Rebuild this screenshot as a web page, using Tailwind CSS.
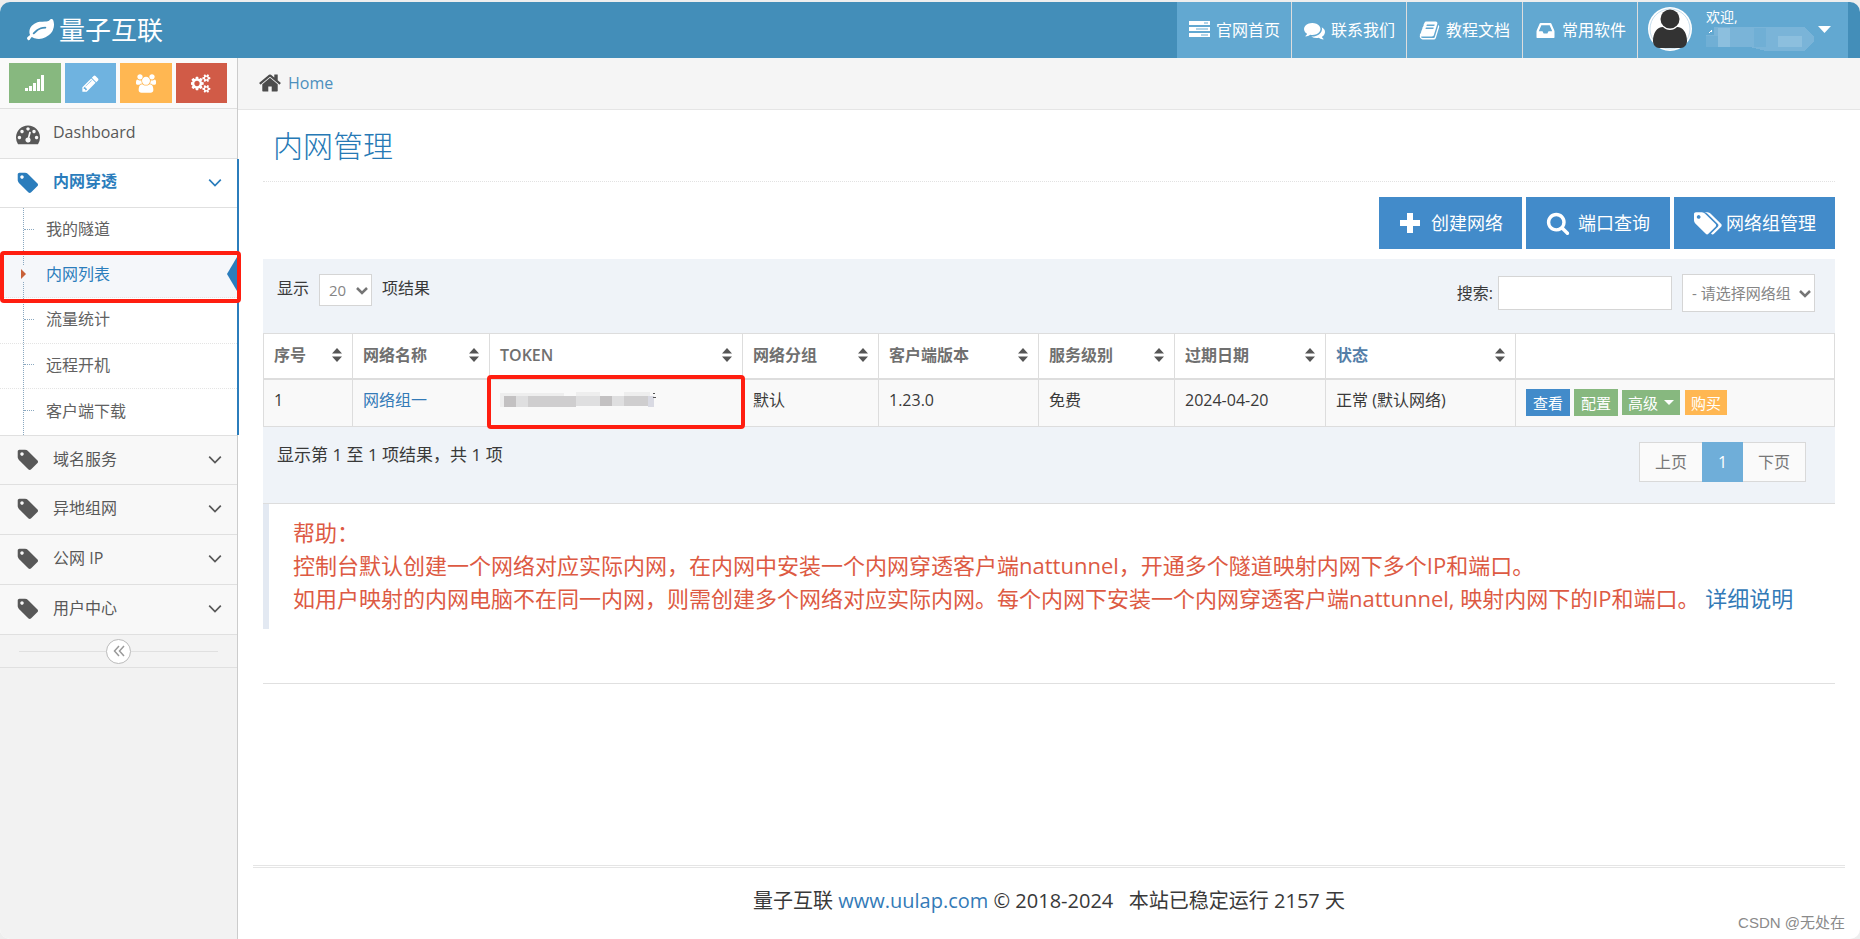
<!DOCTYPE html>
<html lang="zh-CN">
<head>
<meta charset="utf-8">
<meta name="viewport" content="width=device-width, initial-scale=1">
<title>内网管理</title>
<script src="https://cdn.jsdelivr.net/npm/@tailwindcss/browser@4"></script>
</head>
<body class="bg-[#eeeeee] font-['Open_Sans','Noto_Sans_CJK_SC',sans-serif] text-base leading-6 text-[#393939]">
<!-- shared icon shapes -->
<svg class="hidden" aria-hidden="true">
  <symbol id="tag" viewBox="0 0 1792 1792"><path d="M576 448q0-53-37.500-90.500t-90.500-37.500-90.500 37.500-37.500 90.500 37.500 90.500 90.500 37.500 90.500-37.500 37.500-90.500zm1067 576q0 53-37 90l-491 492q-39 37-91 37-53 0-90-37l-715-716q-38-37-64.500-101t-26.500-117v-416q0-52 38-90t90-38h416q53 0 117 26.500t102 64.500l715 714q37 39 37 91z"/></symbol>
  <symbol id="down" viewBox="0 0 14 10"><path d="M1.200 1.700 7 7.500l5.800-5.800" fill="none" stroke="currentColor" stroke-width="1.700"/></symbol>
  <symbol id="sort" viewBox="0 0 10 14"><path d="M5 0 10 5.500H0zM0 8.500h10L5 14z"/></symbol>
</svg>
<div class="flex min-h-screen flex-col pt-[2px]">
<div class="relative flex grow flex-col overflow-hidden rounded-[10px] bg-white">

<header class="flex h-14 shrink-0 items-stretch justify-between bg-[#438eb9] pr-3 text-white">
  <a href="#" class="flex items-center gap-[5px] pl-[27px] text-[26px] leading-8">
    <svg class="size-[27px]" fill="currentColor" viewBox="0 0 1792 1792"><path d="M1280 704q0-26-19-45t-45-19q-172 0-318 49.500t-259.500 134-235.500 219.500q-19 21-19 45 0 26 19 45t45 19q24 0 45-19 27-24 74-71t67-66q137-124 268.500-176t313.500-52q26 0 45-19t19-45zm512-198q0 95-20 193-46 224-184.500 383t-357.500 268q-214 108-438 108-148 0-286-47-15-5-88-42t-96-37q-16 0-39.500 32t-45 70-52.500 70-60 32q-43 0-63.500-17.500t-45.500-59.500q-2-4-6-11t-5.500-10-3-9.500-1.500-13.500q0-35 31-73.500t68-65.500 68-56 31-48q0-4-14-38t-16-44q-9-51-9-104 0-115 43.500-220t119-184.500 170.500-139 204-95.500q55-18 145-25.500t179.500-9 178.500-6 163.500-24 113.500-56.500l29.500-29.500 29.500-28 27-20 36.500-16 43.500-4.500q39 0 70.500 46t47.500 112 24 124 8 96z"/></svg>
    量子互联
  </a>
  <nav class="flex bg-[#62a8d1]">
    <a href="#" class="flex w-[115px] items-center gap-1.5 border-r border-[#dddddd] pl-3">
      <svg class="size-[21px]" fill="currentColor" viewBox="0 0 21 21"><path fill-rule="evenodd" d="M0 1h21v4H0zM15 2.500h4v1h-4zM0 7h21v4H0zM7 8.500h12v1H7zM0 13h21v4H0zM12 14.500h7v1h-7z"/></svg>
      官网首页</a>
    <a href="#" class="flex w-[115px] items-center gap-1.5 border-r border-[#dddddd] pl-3">
      <svg class="size-[21px]" fill="currentColor" viewBox="0 0 1792 1792"><path d="M1408 768q0 139-94 257t-256.500 186.500-353.500 68.500q-86 0-176-16-124 88-278 128-36 9-86 16h-3q-11 0-20.500-8t-11.500-21q-1-3-1-6.500t.5-6.500 2-6l2.500-5 3.500-5.500 4-5 4.500-5 4-4.500q5-6 23-25t26-29.500 22.500-29 25-38.500 20.500-44q-124-72-195-177t-71-224q0-139 94-257t256.500-186.500 353.500-68.500 353.500 68.500 256.500 186.500 94 257zm384 256q0 120-71 224.500t-195 176.500q10 24 20.500 44t25 38.500 22.500 29 26 29.500 23 25q1 1 4 4.500t4.500 5 4 5 3.500 5.500l2.500 5 2 6 .5 6.500-1 6.500q-3 14-13 22t-22 7q-50-7-86-16-154-40-278-128-90 16-176 16-271 0-472-132 58 4 88 4 161 0 309-45t264-129q125-92 192-212t67-254q0-77-23-152 129 71 204 178t75 230z"/></svg>
      联系我们</a>
    <a href="#" class="flex w-[116px] items-center gap-1.5 border-r border-[#dddddd] pl-3">
      <svg class="size-[21px]" fill="currentColor" viewBox="0 0 1792 1792"><path d="M1703 478q40 57 18 129l-275 906q-19 64-76.500 107.500t-122.500 43.500h-923q-77 0-148.500-53.500t-99.500-131.500q-24-67-2-127 0-4 3-27t4-37q1-8-3-21.500t-3-19.500q2-11 8-21t16.500-23.500 16.500-23.500q23-38 45-91.500t30-91.500q3-10 .5-30t-.5-28q3-11 17-28t17-23q21-36 42-92t25-90q1-9-2.500-32t.5-28q4-13 22-30.500t22-22.500q19-26 42.500-84.500t27.500-96.500q1-8-3-25.500t-2-26.500q2-8 9-18t18-23 17-21q8-12 16.500-30.500t15-35 16-36 19.500-32 26.500-23.500 36-11.500 47.500 5.500l-1 3q38-9 51-9h761q74 0 114 56t18 130l-274 906q-36 119-71.500 153.500t-128.500 34.500h-869q-27 0-38 15-11 16-1 43 24 70 144 70h923q29 0 56-15.500t35-41.500l300-987q7-22 5-57 38 15 59 43zm-1064 2q-4 13 2 22.500t20 9.500h608q13 0 25.500-9.500t16.500-22.500l21-64q4-13-2-22.500t-20-9.500h-608q-13 0-25.500 9.500t-16.500 22.500zm-83 256q-4 13 2 22.500t20 9.500h608q13 0 25.500-9.500t16.500-22.500l21-64q4-13-2-22.500t-20-9.500h-608q-13 0-25.500 9.500t-16.500 22.500z"/></svg>
      教程文档</a>
    <a href="#" class="flex w-[115px] items-center gap-1.5 border-r border-[#dddddd] pl-3">
      <svg class="size-[21px]" fill="currentColor" viewBox="0 0 1792 1792"><path d="M1151 960h316q-1-3-2.500-8.500t-2.500-7.500l-212-496h-708l-212 496q-1 3-2.500 8.500t-2.500 7.500h316l95 192h320zm513 30v482q0 26-19 45t-45 19h-1408q-26 0-45-19t-19-45v-482q0-62 25-123l238-552q10-25 36.500-42t52.500-17h832q26 0 52.500 17t36.500 42l238 552q25 61 25 123z"/></svg>
      常用软件</a>
    <button type="button" class="flex w-[210px] items-center pb-0.5 pl-2.5 text-left" aria-label="用户菜单">
      <svg class="size-11 shrink-0" viewBox="0 0 44 44"><circle cx="22" cy="22" r="22" fill="#fff"/><circle cx="22" cy="22" r="20" fill="none" stroke="#c8dfee" stroke-width="1"/><circle cx="22" cy="12" r="9.500" fill="#333"/><path d="M5 34c0-8 4-14 10-14 2 2 4 3 7 3s5-1 7-3c6 0 10 6 10 14 0 4-3 7-6 7H11c-3 0-6-3-6-7z" fill="#333"/></svg>
      <span class="ml-3.5 flex grow flex-col">
        <span class="text-sm leading-5">欢迎,</span>
        <svg class="h-6 w-[110px]" viewBox="0 0 110 24" shape-rendering="crispEdges"><path d="M8 0h90l10 10v5L98 24H60L44 20H0V8h8z" fill="#7ab4d8"/><path d="M12 1h12v19H12zM72 9h24v11H72z" fill="#8cbfde"/><path d="M48 1h12v19H48zM0 9h12v11H0z" fill="#70afd5"/><path d="M2 6l4-3v2z" fill="#fff"/></svg>
      </span>
      <svg class="mr-[17px] h-[7px] w-[13px]" fill="currentColor" viewBox="0 0 13 7"><path d="M0 0h13L6.500 7z"/></svg>
    </button>
  </nav>
</header>

<div class="flex grow">
<aside class="flex w-[238px] shrink-0 flex-col border-r border-[#cccccc] bg-[#f2f2f2] text-[#585858]">
  <div class="grid h-[51px] grid-cols-4 gap-1 border-b border-[#e0e0e0] bg-[#fafafa] pt-[5px] pr-2.5 pb-[5px] pl-[9px] text-white">
    <button type="button" aria-label="统计" class="flex items-center justify-center bg-[#87b87f]"><svg class="h-4 w-5" fill="currentColor" viewBox="0 0 20 16"><path d="M0 13h3v3H0zM4 11h3v5H4zM8 8h3v8H8zM12 4h3v12h-3zM16 0h3v16h-3z"/></svg></button>
    <button type="button" aria-label="编辑" class="flex items-center justify-center bg-[#6fb3e0]"><svg class="size-[19px]" fill="currentColor" viewBox="0 0 1792 1792"><path d="M491 1536l91-91-235-235-91 91v107h128v128h107zm523-928q0-22-22-22-10 0-17 7l-542 542q-7 7-7 17 0 22 22 22 10 0 17-7l542-542q7-7 7-17zm-54-192l416 416-832 832h-416v-416zm683 96q0 53-37 90l-166 166-416-416 166-165q36-38 90-38 53 0 91 38l235 234q37 39 37 91z"/></svg></button>
    <button type="button" aria-label="用户" class="flex items-center justify-center bg-[#ffb752]"><svg class="h-[19px] w-5" fill="currentColor" viewBox="0 0 1920 1792"><path d="M593 896q-162 5-265 128h-134q-82 0-138-40.500t-56-118.500q0-353 124-353 6 0 43.500 21t97.500 42.500 119 21.500q67 0 133-23-5 37-5 66 0 159 93 256zm1071 637q0 120-73 189.500t-194 69.500h-874q-121 0-194-69.500t-73-189.500q0-53 3.500-103.500t14-109 26.500-108.500 43-97.500 62-81 85.500-53.500 111.500-20q10 0 43 21.500t73 48 107 48 135 21.500 135-21.500 107-48 73-48 43-21.500q61 0 111.500 20t85.500 53.500 62 81 43 97.500 26.500 108.500 14 109 3.500 103.500zm-1024-1277q0 106-75 181t-181 75-181-75-75-181 75-181 181-75 181 75 75 181zm704 384q0 159-112.500 271.500t-271.500 112.500-271.500-112.500-112.500-271.500 112.500-271.500 271.500-112.500 271.500 112.500 112.500 271.500zm576 225q0 78-56 118.500t-138 40.500h-134q-103-123-265-128 93-97 93-256 0-29-5-66 66 23 133 23 59 0 119-21.500t97.500-42.500 43.500-21q124 0 124 353zm-128-609q0 106-75 181t-181 75-181-75-75-181 75-181 181-75 181 75 75 181z"/></svg></button>
    <button type="button" aria-label="设置" class="flex items-center justify-center bg-[#d15b47]"><svg class="h-[19px] w-5" fill="currentColor" viewBox="0 0 1920 1792"><path d="M832 896q0-106-75-181t-181-75-181 75-75 181 75 181 181 75 181-75 75-181zm768 512q0-52-38-90t-90-38-90 38-38 90q0 53 37.500 90.500t90.500 37.500 90.500-37.500 37.500-90.500zm0-1024q0-52-38-90t-90-38-90 38-38 90q0 53 37.500 90.500t90.500 37.500 90.500-37.500 37.500-90.500zm-384 421v185q0 10-7 19.500t-16 10.500l-155 24q-11 35-32 76 34 48 90 115 7 11 7 20 0 12-7 19-23 30-82.500 89.500t-78.500 59.500q-11 0-21-7l-115-90q-37 19-77 31-11 108-23 155-7 24-30 24h-186q-11 0-20-7.500t-10-17.500l-23-153q-34-10-75-31l-118 89q-7 7-20 7-11 0-21-8-144-133-144-160 0-9 7-19 10-14 41-53t47-61q-23-44-35-82l-152-24q-10-1-17-9.500t-7-19.500v-185q0-10 7-19.500t16-10.500l155-24q11-35 32-76-34-48-90-115-7-11-7-20 0-12 7-20 22-30 82-89t79-59q11 0 21 7l115 90q34-18 77-32 11-108 23-154 7-24 30-24h186q11 0 20 7.500t10 17.500l23 153q34 10 75 31l118-89q8-7 20-7 11 0 21 8 144 133 144 160 0 8-7 19-12 16-42 54t-45 60q23 48 34 82l152 23q10 2 17 10.500t7 19.500zm640 533v140q0 16-149 31-12 27-30 52 51 113 51 138 0 4-4 7-122 71-124 71-8 0-46-47t-52-68q-20 2-30 2t-30-2q-14 21-52 68t-46 47q-2 0-124-71-4-3-4-7 0-25 51-138-18-25-30-52-149-15-149-31v-140q0-16 149-31 13-29 30-52-51-113-51-138 0-4 4-7 4-2 35-20t59-34 30-16q8 0 46 46.500t52 67.500q20-2 30-2t30 2q51-71 92-112l6-2q4 0 124 70 4 3 4 7 0 25-51 138 17 23 30 52 149 15 149 31zm0-1024v140q0 16-149 31-12 27-30 52 51 113 51 138 0 4-4 7-122 71-124 71-8 0-46-47t-52-68q-20 2-30 2t-30-2q-14 21-52 68t-46 47q-2 0-124-71-4-3-4-7 0-25 51-138-18-25-30-52-149-15-149-31v-140q0-16 149-31 13-29 30-52-51-113-51-138 0-4 4-7 4-2 35-20t59-34 30-16q8 0 46 46.500t52 67.500q20-2 30-2t30 2q51-71 92-112l6-2q4 0 124 70 4 3 4 7 0 25-51 138 17 23 30 52 149 15 149 31z"/></svg></button>
  </div>

  <nav>
    <a href="#" class="flex h-[50px] items-center border-b border-[#e0e0e0] bg-[#f8f8f8] pb-1 pl-4">
      <svg class="mt-1 mr-[13px] size-6" fill="currentColor" viewBox="0 0 1792 1792"><path d="M384 1152q0-53-37.500-90.500t-90.500-37.500-90.500 37.500-37.500 90.500 37.500 90.500 90.500 37.500 90.500-37.500 37.500-90.500zm192-448q0-53-37.500-90.500t-90.500-37.500-90.500 37.500-37.500 90.500 37.500 90.500 90.500 37.500 90.500-37.500 37.500-90.500zm428 481l101-382q6-26-7.500-48.500t-38.500-29.500-48 6.500-30 39.500l-101 382q-60 5-107 43.500t-63 98.500q-20 77 20 146t117 89 146-20 89-117q16-60-6-117t-72-91zm660-33q0-53-37.500-90.500t-90.500-37.500-90.500 37.500-37.500 90.500 37.500 90.500 90.500 37.500 90.500-37.500 37.500-90.500zm-640-640q0-53-37.500-90.500t-90.500-37.500-90.500 37.500-37.500 90.500 37.500 90.500 90.500 37.500 90.500-37.500 37.500-90.500zm448 192q0-53-37.500-90.500t-90.500-37.500-90.500 37.500-37.500 90.500 37.500 90.500 90.500 37.500 90.500-37.500 37.500-90.500zm320 448q0 261-141 483-19 29-54 29h-1402q-35 0-54-29-141-221-141-483 0-182 71-348t191-286 286-191 348-71 348 71 286 191 191 286 71 348z"/></svg>
      Dashboard</a>

    <div class="relative -mr-[2px] border-r-2 border-[#2b7dbc] bg-white">
      <a href="#" class="flex h-[49px] items-center border-b border-[#e0e0e0] pb-1 pl-4 font-bold text-[#2b7dbc]">
        <svg class="mt-1 mr-[13px] size-6" fill="currentColor"><use href="#tag"/></svg>内网穿透
        <svg class="mt-1 mr-[15px] ml-auto h-2.5 w-3.5"><use href="#down"/></svg></a>
      <ul class="relative text-[#616161] before:absolute before:top-0 before:bottom-0 before:left-[23px] before:z-10 before:border-l before:border-dotted before:border-[#8aa8c0]">
        <li class="flex h-[45px] items-center pb-[3px]"><span class="ml-6 w-2.5 border-t border-dotted border-[#8aa8c0]"></span><a href="#" class="ml-3">我的隧道</a></li>
        <li class="relative flex h-[45px] items-center border-y border-dotted border-[#e4e4e4] bg-[#f5f7fa] pb-[3px] text-[#2b7dbc]">
          <svg class="z-20 ml-[19px] h-4 w-[9px]" viewBox="0 0 9 16"><path fill="#f5f7fa" d="M0 0h9v16H0z"/><path fill="#c86139" d="M2 3l5 5-5 5z"/></svg>
          <a href="#" class="ml-[18px]">内网列表</a>
          <svg class="absolute right-0 h-[34px] w-2.5" fill="#2b7dbc" viewBox="0 0 10 34"><path d="M10 0v34L0 17z"/></svg>
          <span class="pointer-events-none absolute -top-[3px] -right-1 left-0 z-30 h-[52px] rounded-[4px] border-4 border-[#ff1e10]"></span>
        </li>
        <li class="flex h-[46px] items-center border-b border-dotted border-[#e4e4e4] pb-[3px]"><span class="ml-6 w-2.5 border-t border-dotted border-[#8aa8c0]"></span><a href="#" class="ml-3">流量统计</a></li>
        <li class="flex h-[45px] items-center border-b border-dotted border-[#e4e4e4] pb-[3px]"><span class="ml-6 w-2.5 border-t border-dotted border-[#8aa8c0]"></span><a href="#" class="ml-3">远程开机</a></li>
        <li class="flex h-[46px] items-center pb-[3px]"><span class="ml-6 w-2.5 border-t border-dotted border-[#8aa8c0]"></span><a href="#" class="ml-3">客户端下载</a></li>
      </ul>
    </div>

    <a href="#" class="flex h-[50px] items-center border-y border-[#e0e0e0] bg-[#f8f8f8] pb-[3px] pl-4"><svg class="mt-0.5 mr-[13px] size-6" fill="currentColor"><use href="#tag"/></svg>域名服务<svg class="mt-0.5 mr-[15px] ml-auto h-2.5 w-3.5"><use href="#down"/></svg></a>
    <a href="#" class="flex h-[50px] items-center border-b border-[#e0e0e0] bg-[#f8f8f8] pb-[3px] pl-4"><svg class="mt-0.5 mr-[13px] size-6" fill="currentColor"><use href="#tag"/></svg>异地组网<svg class="mt-0.5 mr-[15px] ml-auto h-2.5 w-3.5"><use href="#down"/></svg></a>
    <a href="#" class="flex h-[50px] items-center border-b border-[#e0e0e0] bg-[#f8f8f8] pb-[3px] pl-4"><svg class="mt-0.5 mr-[13px] size-6" fill="currentColor"><use href="#tag"/></svg>公网 IP<svg class="mt-0.5 mr-[15px] ml-auto h-2.5 w-3.5"><use href="#down"/></svg></a>
    <a href="#" class="flex h-[50px] items-center border-b border-[#e0e0e0] bg-[#f8f8f8] pb-[3px] pl-4"><svg class="mt-0.5 mr-[13px] size-6" fill="currentColor"><use href="#tag"/></svg>用户中心<svg class="mt-0.5 mr-[15px] ml-auto h-2.5 w-3.5"><use href="#down"/></svg></a>
  </nav>
  <div class="flex h-[33px] items-center border-b border-[#e0e0e0] bg-[#f3f3f3] px-[19px]">
    <span class="h-px grow bg-[#e0e0e0]"></span>
    <button type="button" aria-label="收起菜单" class="flex size-[25px] items-center justify-center rounded-full border border-[#bbbbbb] bg-white text-[#999999]"><svg class="size-3" viewBox="0 0 12 12" fill="none" stroke="currentColor" stroke-width="1.500"><path d="M6 1 1.500 6 6 11M11 1 6.500 6 11 11"/></svg></button>
    <span class="h-px grow bg-[#e0e0e0]"></span>
  </div>
</aside>

<main class="flex min-w-0 grow flex-col">
  <nav class="flex h-[52px] items-center gap-1.5 border-b border-[#e5e5e5] bg-[#f5f5f5] pb-0.5 pl-5">
    <svg class="size-6 text-[#4c4c4c]" fill="currentColor" viewBox="0 0 1792 1792"><path d="M1472 992v480q0 26-19 45t-45 19h-384v-384h-256v384h-384q-26 0-45-19t-19-45v-480q0-1 .5-3t.5-3l575-474 575 474q1 2 1 6zm223-69l-62 74q-8 9-21 11h-3q-13 0-21-7l-692-577-692 577q-12 8-24 7-13-2-21-11l-62-74q-8-10-7-23.500t11-21.500l719-599q32-26 76-26t76 26l244 204v-195q0-14 9-23t23-9h192q14 0 23 9t9 23v408l219 182q10 8 11 21.500t-7 23.500z"/></svg>
    <a href="#" class="text-[#4c8fbd]">Home</a>
  </nav>

  <div class="px-[25px]">
    <h1 class="flex h-[72px] items-center border-b border-dotted border-[#e2e2e2] pl-2.5 text-[30px] leading-9 font-light text-[#2679b5]">内网管理</h1>
    <div class="mt-[15px] flex justify-end gap-1 text-lg leading-6 text-white text-shadow-[0_-1px_0_rgb(0_0_0/0.25)]">
      <button type="button" class="flex h-[52px] items-center gap-2.5 bg-[#428bca] pr-[19px] pl-5"><svg class="size-[22px]" fill="currentColor" viewBox="0 0 22 22"><path d="M8 1h6v7h7v6h-7v7H8v-7H1V8h7z"/></svg>创建网络</button>
      <button type="button" class="flex h-[52px] items-center gap-2 bg-[#428bca] pr-5 pl-5"><svg class="size-6" fill="currentColor" viewBox="0 0 1792 1792"><path d="M1216 832q0-185-131.500-316.500t-316.500-131.500-316.500 131.500-131.500 316.500 131.500 316.500 316.500 131.500 316.500-131.500 131.500-316.500zm512 832q0 52-38 90t-90 38q-54 0-90-38l-343-342q-179 124-399 124-143 0-273.500-55.500t-225-150-150-225-55.500-273.500 55.500-273.500 150-225 225-150 273.500-55.500 273.500 55.500 225 150 150 225 55.500 273.500q0 220-124 399l343 343q37 37 37 90z"/></svg>端口查询</button>
      <button type="button" class="flex h-[52px] items-center gap-1 bg-[#428bca] pr-[19px] pl-5"><svg class="h-[27px] w-7" fill="currentColor" viewBox="0 0 1920 1792"><path d="M448 448q0-53-37.500-90.500t-90.500-37.500-90.500 37.500-37.500 90.500 37.500 90.500 90.500 37.500 90.500-37.500 37.500-90.500zm1067 576q0 53-37 90l-491 492q-39 37-91 37-53 0-90-37l-715-716q-38-37-64.500-101t-26.500-117v-416q0-52 38-90t90-38h416q53 0 117 26.500t102 64.500l715 714q37 39 37 91zm384 0q0 53-37 90l-491 492q-39 37-91 37-36 0-59-14t-53-45l470-470q37-37 37-90 0-52-37-91l-715-714q-38-38-102-64.500t-117-26.500h224q53 0 117 26.500t102 64.500l715 714q37 39 37 91z"/></svg>网络组管理</button>
    </div>

    <section class="mt-2.5 border-b border-[#dddddd] bg-[#eff3f8]">
      <div class="flex h-[74px] items-start justify-between pt-[15px] pr-5 pl-3.5">
        <label class="flex items-start gap-2.5"><span class="pt-0.5">显示</span>
          <span class="relative"><select class="h-8 w-[53px] appearance-none border border-[#d5d5d5] bg-white pl-[9px] text-[15px] text-[#858585]"><option>20</option></select><svg class="pointer-events-none absolute top-3 right-1 h-2.5 w-3 text-[#757575]" fill="none" stroke="currentColor" stroke-width="2.500" viewBox="0 0 12 10"><path d="M1 2l5 5 5-5"/></svg></span>
          <span class="pt-0.5">项结果</span></label>
        <div class="flex items-start gap-2.5">
          <label class="flex items-center gap-[5px] pt-0.5">搜索:<input type="text" class="h-[34px] w-[174px] border border-[#d5d5d5] bg-white px-2"></label>
          <span class="relative"><select aria-label="网络组" class="h-[38px] w-[133px] appearance-none border border-[#d5d5d5] bg-white pl-[9px] text-[15px] text-[#858585]"><option>- 请选择网络组</option></select><svg class="pointer-events-none absolute top-[15px] right-1 h-2.5 w-3 text-[#757575]" fill="none" stroke="currentColor" stroke-width="2.500" viewBox="0 0 12 10"><path d="M1 2l5 5 5-5"/></svg></span>
        </div>
      </div>

      <table class="w-full table-fixed border-collapse text-left">
        <colgroup><col class="w-[89px]"><col class="w-[137px]"><col class="w-[253px]"><col class="w-[136px]"><col class="w-[160px]"><col class="w-[136px]"><col class="w-[151px]"><col class="w-[190px]"><col></colgroup>
        <thead class="bg-white text-[#707070]">
          <tr class="h-[45px] [&>th]:border [&>th]:border-b-2 [&>th]:border-[#dddddd] [&>th]:px-2.5 [&>th]:pb-0.5">
            <th><div class="flex items-center justify-between">序号<svg class="h-3.5 w-2.5" fill="#555"><use href="#sort"/></svg></div></th>
            <th><div class="flex items-center justify-between">网络名称<svg class="h-3.5 w-2.5" fill="#555"><use href="#sort"/></svg></div></th>
            <th><div class="flex items-center justify-between"><span class="font-semibold">TOKEN</span><svg class="h-3.5 w-2.5" fill="#555"><use href="#sort"/></svg></div></th>
            <th><div class="flex items-center justify-between">网络分组<svg class="h-3.5 w-2.5" fill="#555"><use href="#sort"/></svg></div></th>
            <th><div class="flex items-center justify-between">客户端版本<svg class="h-3.5 w-2.5" fill="#555"><use href="#sort"/></svg></div></th>
            <th><div class="flex items-center justify-between">服务级别<svg class="h-3.5 w-2.5" fill="#555"><use href="#sort"/></svg></div></th>
            <th><div class="flex items-center justify-between">过期日期<svg class="h-3.5 w-2.5" fill="#555"><use href="#sort"/></svg></div></th>
            <th class="text-[#547ea8]"><div class="flex items-center justify-between">状态<svg class="h-3.5 w-2.5" fill="#555"><use href="#sort"/></svg></div></th>
            <th></th>
          </tr>
        </thead>
        <tbody>
          <tr class="h-12 bg-[#f9f9f9] [&>td]:border [&>td]:border-[#dddddd] [&>td]:px-2.5 [&>td:not(:last-child)]:pb-[5px]">
            <td>1</td>
            <td><a href="#" class="text-[#337ab7]">网络组一</a></td>
            <td class="relative">
              <svg class="h-4 w-[156px]" viewBox="0 0 156 16" shape-rendering="crispEdges"><path fill="#eeeeee" d="M0 1h64v14H0zM76 0h24v14H76zM124 0h26v14h-26z"/><path fill="#c3c1c2" d="M4 4h12v11H4zM100 4h12v10h-12z"/><path fill="#cfcecf" d="M28 4h48v11H28zM124 4h24v10h-24z"/><path fill="#dfdfe0" d="M16 4h12v11H16zM76 4h24v10H76zM112 4h12v10h-12z"/><path fill="#d9dae3" d="M148 4h6v11h-6z"/><path fill="#555" d="M153 1h2v1h-2zM153 5h3v1h-3z"/></svg>
              <span class="pointer-events-none absolute -inset-x-[3px] -top-[5px] -bottom-[3px] rounded-[4px] border-4 border-[#ff1e10]"></span>
            </td>
            <td>默认</td>
            <td>1.23.0</td>
            <td>免费</td>
            <td>2024-04-20</td>
            <td>正常 (默认网络)</td>
            <td><div class="flex items-center gap-1 text-[15px] leading-5 text-white text-shadow-[0_-1px_0_rgb(0_0_0/0.25)]">
              <button type="button" class="h-[27px] bg-[#428bca] px-[7px]">查看</button>
              <button type="button" class="h-[27px] bg-[#87b87f] px-[7px]">配置</button>
              <button type="button" class="flex h-[25px] items-center gap-1.5 bg-[#87b87f] px-1.5">高级<svg class="h-[5px] w-2.5" fill="currentColor" viewBox="0 0 10 5"><path d="M0 0h10L5 5z"/></svg></button>
              <button type="button" class="ml-px h-[25px] bg-[#ffb752] px-1.5">购买</button>
            </div></td>
          </tr>
        </tbody>
      </table>

      <div class="flex h-[76px] items-start justify-between pt-4 pr-[29px] pl-3.5">
        <p class="text-[17px]">显示第 1 至 1 项结果，共 1 项</p>
        <div class="-mt-px flex h-10 border border-[#d9d9d9] bg-[#fafafa] text-[#777777]">
          <button type="button" class="px-[15px]">上页</button>
          <button type="button" class="-my-px w-[41px] bg-[#6faed9] text-white" aria-current="page">1</button>
          <button type="button" class="px-[15px]">下页</button>
        </div>
      </div>
    </section>

    <section class="h-[125px] border-l-[6px] border-[#e3e9f2] pt-3 pl-6 text-[22px] leading-[33px] text-[#dd5a43]">
      <p>帮助：</p>
      <p>控制台默认创建一个网络对应实际内网，在内网中安装一个内网穿透客户端nattunnel，开通多个隧道映射内网下多个IP和端口。</p>
      <p>如用户映射的内网电脑不在同一内网，则需创建多个网络对应实际内网。每个内网下安装一个内网穿透客户端nattunnel, 映射内网下的IP和端口。 <a href="#" class="text-[#337ab7]">详细说明</a></p>
    </section>
    <hr class="mt-[54px] border-[#e0e0e0]">
  </div>

  <footer class="mx-[15px] mt-auto h-[74px] border-t-[3px] border-double border-[#e5e5e5] pt-[19px] text-center text-xl leading-7">量子互联 <a href="#" class="text-[#337ab7]">www.uulap.com</a> © 2018-2024 &nbsp; 本站已稳定运行 2157 天</footer>
</main>
</div>
<span class="absolute right-[15px] bottom-1 font-['Liberation_Sans','Noto_Sans_CJK_SC',sans-serif] text-[15px] leading-6 text-[#8a8a8a]">CSDN @无处在</span>
</div>
</div>
</body>
</html>
